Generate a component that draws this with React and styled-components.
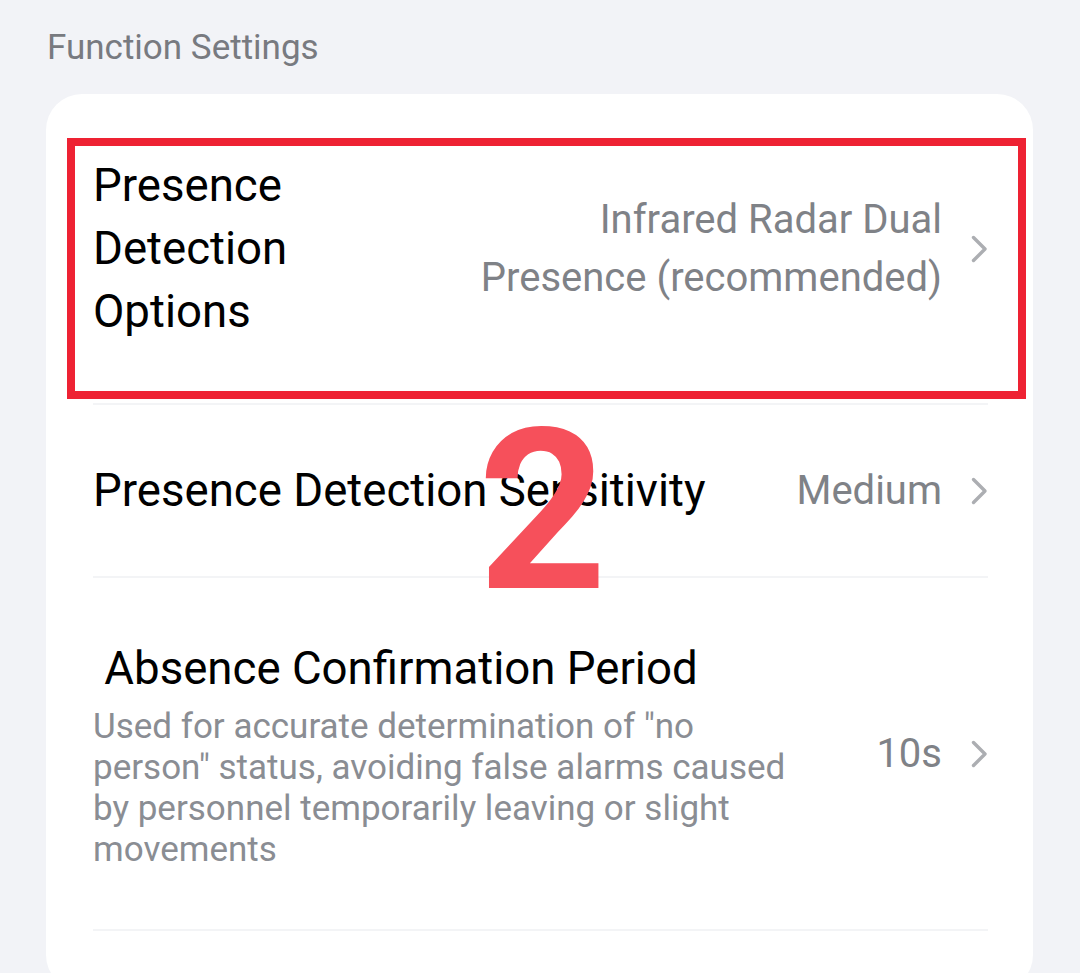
import React from 'react';
import styled, { createGlobalStyle } from 'styled-components';

const GlobalStyle = createGlobalStyle`
    html, body {
        margin: 0;
        padding: 0;
        background: #f2f3f7;
        font-family: Roboto, 'Liberation Sans', sans-serif;
    }
`;

const rows = [
    {
        title: 'Presence Detection Options',
        value: 'Infrared Radar Dual Presence (recommended)',
        pad: 60,
        marked: true,
    },
    {
        title: 'Presence Detection Sensitivity',
        value: 'Medium',
        pad: 54,
    },
    {
        title: '\u00a0Absence Confirmation Period',
        desc: 'Used for accurate determination of "no person" status, avoiding false alarms caused by personnel temporarily leaving or slight movements',
        value: '10s',
        pad: 59,
    },
];

const Chevron = () => (
    <Arrow viewBox="0 0 17 28" width="17" height="28">
        <polyline points="2.5,2.5 14,14 2.5,25.5" fill="none" stroke="#acaeb2" strokeWidth="3.4" strokeLinecap="round" strokeLinejoin="round" />
    </Arrow>
);

const App = () => {
    return (
        <Page>
            <GlobalStyle />
            <SectionTitle>Function Settings</SectionTitle>
            <Card>
                {rows.map((row) => (
                    <Row key={row.title} $pad={row.pad}>
                        <Left>
                            <Title>{row.title}</Title>
                            {row.desc && <Desc>{row.desc}</Desc>}
                        </Left>
                        <Value>{row.value}</Value>
                        <Chevron />
                        {row.marked && <Marker />}
                    </Row>
                ))}
                <Step>2</Step>
            </Card>
        </Page>
    );
};

const Page = styled.div`
    width: 1080px;
    min-height: 973px;
    padding-top: 28px;
    box-sizing: border-box;
`;
const SectionTitle = styled.div`
    margin: 0 0 26px 47px;
    font-size: 35px;
    line-height: 40px;
    color: #787a80;
`;
const Card = styled.div`
    position: relative;
    margin: 0 47px 0 46px;
    padding: 0 45px 60px 47px;
    background: #fff;
    border-radius: 36px;
`;
const Row = styled.div`
    position: relative;
    display: flex;
    align-items: center;
    padding: ${(p) => p.$pad}px 0;
    border-bottom: 2px solid #f3f4f6;
`;
const Left = styled.div`
    flex: 1;
    min-width: 0;
    padding-right: 20px;
`;
const Title = styled.div`
    font-size: 45.6px;
    line-height: 63px;
    color: #000;
`;
const Desc = styled.div`
    max-width: 700px;
    margin-top: 6px;
    font-size: 35px;
    line-height: 41px;
    color: #8a8d93;
`;
const Value = styled.div`
    flex: 0 0 auto;
    max-width: 480px;
    text-align: right;
    font-size: 40px;
    line-height: 58px;
    color: #7f8287;
`;
const Arrow = styled.svg`
    flex: 0 0 auto;
    margin-left: 29px;
    display: block;
`;
const Marker = styled.div`
    position: absolute;
    top: 44px;
    left: -26px;
    right: -38px;
    bottom: 4px;
    border: 8px solid #ee2233;
    pointer-events: none;
`;
const Step = styled.div`
    position: absolute;
    top: 305px;
    left: 432px;
    font-size: 225px;
    line-height: 1;
    font-weight: 700;
    color: #f6505b;
`;

export default App;
